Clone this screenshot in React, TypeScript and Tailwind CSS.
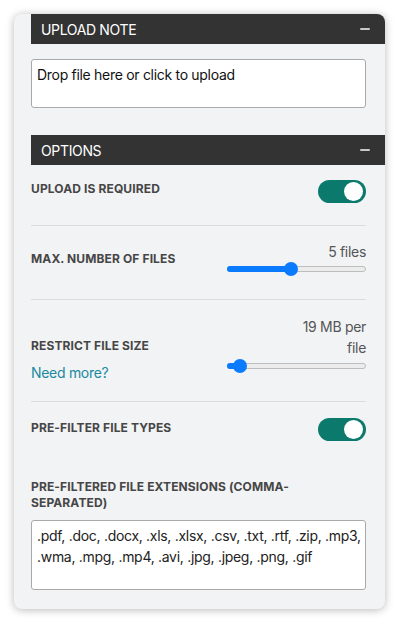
import React from "react";

const font = { fontFamily: "Inter, 'Noto Sans', sans-serif" };

function PanelHeader({ title }: { title: string }) {
  return (
    <div className="flex h-[30px] items-center justify-between bg-[#333333] pl-[10px] pr-[15px] text-[14px] tracking-[-0.35px] text-white">
      <span>{title}</span>
      <span className="h-[2px] w-[10px] rounded-full bg-[#c8c8c8]" aria-hidden />
    </div>
  );
}

function Toggle() {
  return (
    <span className="flex h-[23px] w-[48px] items-center justify-end rounded-full bg-[#0b7a6c] pr-[3px]">
      <span className="size-[19px] rounded-full bg-white" />
    </span>
  );
}

function Slider({ pct }: { pct: number }) {
  return (
    <div className="relative h-[14px] w-full">
      <div className="absolute inset-x-0 top-[4px] h-[6px] rounded-full border border-[#bdbdbd] bg-[#ececec]" />
      <div
        className="absolute left-0 top-[4px] h-[6px] rounded-full bg-[#0a7aff]"
        style={{ width: `${pct}%` }}
      />
      <div
        className="absolute top-0 size-[14px] -translate-x-1/2 rounded-full bg-[#0a7aff]"
        style={{ left: `${pct}%` }}
      />
    </div>
  );
}

const label = "text-[12px] font-bold uppercase leading-[16px] tracking-[0.01em] text-[#464646]";

export default function App() {
  return (
    <div className="min-h-screen bg-white pt-[14px] tracking-[-0.3px]" style={font}>
      <div className="mx-[14px] overflow-hidden rounded-lg bg-[#f2f3f5] pb-[19px] pl-[17px] shadow-[0_1px_8px_rgba(0,0,0,0.28)]">
        <PanelHeader title="UPLOAD NOTE" />
        <div className="pr-[19px]">
          <div className="mt-[15px] h-[49px] rounded-[3px] border border-[#a9a9a9] bg-white px-[5px] pt-[5px] text-[14px] leading-[20px] text-[#111]">
            Drop file here or click to upload
          </div>
        </div>

        <div className="mt-[27px]">
          <PanelHeader title="OPTIONS" />
        </div>

        <div className="pr-[19px]">
          {/* Upload required */}
          <div className="flex items-start justify-between border-b border-[#dcdcdc] pb-[22px] pt-[15px]">
            <span className={`${label} mt-[1px]`}>Upload is required</span>
            <Toggle />
          </div>

          {/* Max files */}
          <div className="flex items-start justify-between border-b border-[#dcdcdc] pb-[23px] pt-[17px]">
            <span className={`${label} mt-[8px]`}>Max. number of files</span>
            <div className="flex w-[139px] flex-col items-end">
              <span className="text-[14px] leading-[18px] text-[#555]">5 files</span>
              <div className="mt-[1px] w-full">
                <Slider pct={46} />
              </div>
            </div>
          </div>

          {/* Restrict size */}
          <div className="flex items-start justify-between border-b border-[#dcdcdc] pb-[19px] pt-[16px]">
            <div className="mt-[22px] flex flex-col">
              <span className={label}>Restrict file size</span>
              <span className="mt-[10px] text-[14px] leading-[18px] text-[#1a8aa0]">Need more?</span>
            </div>
            <div className="flex w-[139px] flex-col items-end">
              <span className="w-[70px] text-right text-[14px] leading-[21px] text-[#555]">19 MB per file</span>
              <div className="mt-[1px] w-full">
                <Slider pct={9} />
              </div>
            </div>
          </div>

          {/* Pre-filter */}
          <div className="flex items-start justify-between pt-[16px]">
            <span className={`${label} mt-[2px]`}>Pre-filter file types</span>
            <Toggle />
          </div>

          <div className={`${label} mt-[38px] pr-[60px]`}>
            Pre-filtered file extensions (comma-separated)
          </div>
          <div className="mt-[9px] h-[70px] overflow-hidden whitespace-nowrap rounded-[3px] border border-[#a9a9a9] bg-white pl-[5px] pt-[4px] text-[14px] leading-[21px] text-[#222]">
            .pdf, .doc, .docx, .xls, .xlsx, .csv, .txt, .rtf, .zip, .mp3,
            <br />
            .wma, .mpg, .mp4, .avi, .jpg, .jpeg, .png, .gif
          </div>
        </div>
      </div>
    </div>
  );
}
